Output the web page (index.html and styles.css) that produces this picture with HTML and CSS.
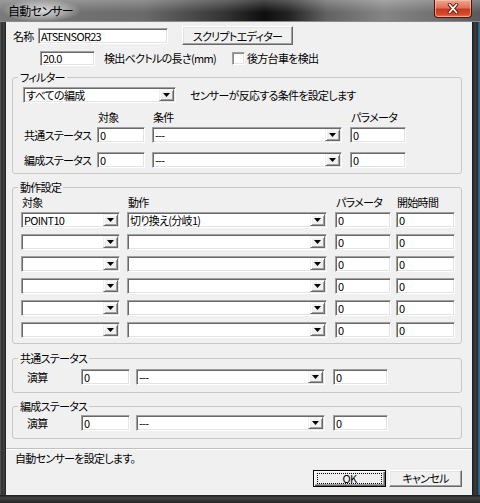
FILE: index.html
```html
<!DOCTYPE html>
<html lang="ja">
<head>
<meta charset="utf-8">
<title>自動センサー</title>
<link rel="stylesheet" href="styles.css">
</head>
<body>
<div class="window">
  <div class="titlebar">
    <span class="title">自動センサー</span>
    <span class="close"><svg width="14" height="11" viewBox="0 0 14 11"><path d="M3.5 1.5 L10.5 9.5 M10.5 1.5 L3.5 9.5" stroke="#6a1a0c" stroke-width="3.6" stroke-linecap="round"/><path d="M3.5 1.5 L10.5 9.5 M10.5 1.5 L3.5 9.5" stroke="#fff" stroke-width="1.8" stroke-linecap="round"/></svg></span>
  </div>
  <div class="middle">
    <div class="frame-left"></div>
    <div class="client">
      <div class="row row-name">
        <span class="lbl lbl-name">名称</span>
        <div class="field f-name">ATSENSOR23</div>
        <div class="btn btn-script">スクリプトエディター</div>
      </div>
      <div class="row row-len">
        <div class="field f-len">20.0</div>
        <span class="lbl lbl-len">検出ベクトルの長さ(mm)</span>
        <span class="check"></span>
        <span class="lbl lbl-check">後方台車を検出</span>
      </div>

      <div class="group g-filter">
        <span class="legend">フィルター</span>
        <div class="filter-top">
          <div class="combo c-all"><span class="val">すべての編成</span><span class="drop"></span></div>
          <span class="lbl lbl-desc">センサーが反応する条件を設定します</span>
        </div>
        <div class="fcols filter-head">
          <span></span><span class="hdr">対象</span><span class="hdr">条件</span><span class="hdr">パラメータ</span>
        </div>
        <div class="fcols filter-rows">
          <span class="lbl">共通ステータス</span><div class="field">0</div><div class="combo"><span class="val">---</span><span class="drop"></span></div><div class="field">0</div>
          <span class="lbl">編成ステータス</span><div class="field">0</div><div class="combo"><span class="val">---</span><span class="drop"></span></div><div class="field">0</div>
        </div>
      </div>

      <div class="group g-action">
        <span class="legend">動作設定</span>
        <div class="acols action-head">
          <span class="hdr">対象</span><span class="hdr">動作</span><span class="hdr">パラメータ</span><span class="hdr">開始時間</span>
        </div>
        <div class="acols action-rows">
          <div class="combo"><span class="val">POINT10</span><span class="drop"></span></div><div class="combo"><span class="val">切り換え(分岐1)</span><span class="drop"></span></div><div class="field">0</div><div class="field">0</div>
          <div class="combo"><span class="val"></span><span class="drop"></span></div><div class="combo"><span class="val"></span><span class="drop"></span></div><div class="field">0</div><div class="field">0</div>
          <div class="combo"><span class="val"></span><span class="drop"></span></div><div class="combo"><span class="val"></span><span class="drop"></span></div><div class="field">0</div><div class="field">0</div>
          <div class="combo"><span class="val"></span><span class="drop"></span></div><div class="combo"><span class="val"></span><span class="drop"></span></div><div class="field">0</div><div class="field">0</div>
          <div class="combo"><span class="val"></span><span class="drop"></span></div><div class="combo"><span class="val"></span><span class="drop"></span></div><div class="field">0</div><div class="field">0</div>
          <div class="combo"><span class="val"></span><span class="drop"></span></div><div class="combo"><span class="val"></span><span class="drop"></span></div><div class="field">0</div><div class="field">0</div>
        </div>
      </div>

      <div class="group g-op g-op1">
        <span class="legend">共通ステータス</span>
        <div class="ocols">
          <span class="lbl">演算</span><div class="field">0</div><div class="combo"><span class="val">---</span><span class="drop"></span></div><div class="field">0</div>
        </div>
      </div>

      <div class="group g-op g-op2">
        <span class="legend">編成ステータス</span>
        <div class="ocols">
          <span class="lbl">演算</span><div class="field">0</div><div class="combo"><span class="val">---</span><span class="drop"></span></div><div class="field">0</div>
        </div>
      </div>

      <div class="sep"></div>
      <div class="status">自動センサーを設定します。</div>
      <div class="buttons">
        <div class="btn btn-ok"><span class="focus">OK</span></div>
        <div class="btn btn-cancel">キャンセル</div>
      </div>
    </div>
    <div class="frame-right"></div>
  </div>
  <div class="frame-bottom"></div>
</div>
</body>
</html>
```

FILE: styles.css
```css
* { box-sizing: border-box; margin: 0; padding: 0; }
html, body { width: 480px; height: 503px; overflow: hidden; }
body {
  background: #2e2e2e;
  font-family: "Noto Sans CJK JP", "Liberation Sans", sans-serif;
  font-size: 11px;
  letter-spacing: -0.7px;
  line-height: 14px;
  color: #000;
  font-feature-settings: "palt";
}
.window { width: 480px; height: 503px; display: flex; flex-direction: column; }

/* title bar */
.titlebar {
  height: 22px;
  display: flex;
  align-items: flex-start;
  background:
    linear-gradient(180deg, rgba(255,255,255,.25) 0, rgba(255,255,255,.06) 45%, rgba(0,0,0,0) 60%),
    linear-gradient(90deg, #7a7a7a 0%, #6a6a6a 30%, #333 47%, #0e0e0e 55%, #222 60%, #626262 68%, #858585 80%, #727272 90%, #5a5a5a 100%);
  border-bottom: 1px solid #8a8a8a;
}
.title {
  margin-left: 2px;
  padding: 0 8px 0 6px;
  height: 21px;
  line-height: 21px;
  font-size: 12px;
  color: #000;
  background: radial-gradient(ellipse 50% 55% at 50% 50%, rgba(225,225,225,.95) 0%, rgba(200,200,200,.6) 60%, rgba(180,180,180,0) 100%);
}
.close {
  margin-left: auto;
  margin-right: 8px;
  width: 38px;
  height: 18px;
  display: flex;
  align-items: center;
  justify-content: center;
  border: 1px solid #4a140a;
  border-top: none;
  border-radius: 0 0 4px 4px;
  background: linear-gradient(180deg, #f0a890 0%, #e0725a 45%, #c83a1e 55%, #d84a2a 85%, #f08060 100%);
  box-shadow: inset 0 0 0 1px rgba(255,210,190,.55);
}

/* frame */
.middle { flex: 1; display: flex; min-height: 0; }
.frame-left { width: 6px; background: linear-gradient(90deg, #5a5a5a 0, #2c2c2c 2px, #454545 4px, #1c1c1c 6px); }
.frame-right { width: 8px; background: linear-gradient(90deg, #1c1c1c 0, #3c3c3c 3px, #2a2a2a 6px, #2a8fc0 7px, #1a5a80 8px); }
.frame-bottom { height: 8px; background: linear-gradient(180deg, #1c1c1c 0, #454545 3px, #303030 6px, #222 8px); }

.client {
  width: 466px;
  height: 473px;
  background: #f0f0f0;
  display: flex;
  flex-direction: column;
}

/* controls */
.lbl { white-space: nowrap; }
.field {
  height: 16px;
  background: #fff;
  border: 1px solid;
  border-color: #a0a0a0 #fff #fff #a0a0a0;
  box-shadow: inset 1px 1px 0 #696969, inset -1px -1px 0 #e3e3e3;
  padding-left: 2px;
  line-height: 14px;
  white-space: nowrap;
  overflow: hidden;
}
.combo {
  height: 16px;
  background: #fff;
  border: 1px solid;
  border-color: #a0a0a0 #fff #fff #a0a0a0;
  box-shadow: inset 1px 1px 0 #696969, inset -1px -1px 0 #e3e3e3;
  display: flex;
  align-items: stretch;
}
.combo .val { flex: 1; padding-left: 2px; line-height: 14px; white-space: nowrap; overflow: hidden; }
.combo .drop {
  width: 15px;
  margin: 1px 1px 1px 0;
  background: #f0f0f0;
  border: 1px solid;
  border-color: #f0f0f0 #696969 #696969 #f0f0f0;
  box-shadow: inset 1px 1px 0 #fff, inset -1px -1px 0 #a0a0a0;
  display: flex;
  align-items: center;
  justify-content: center;
}
.combo .drop::after {
  content: "";
  width: 7px;
  height: 4px;
  background: #000;
  clip-path: polygon(0 0, 100% 0, 50% 100%);
}
.btn {
  background: #f0f0f0;
  border: 1px solid;
  border-color: #fff #696969 #696969 #fff;
  box-shadow: inset -1px -1px 0 #a0a0a0, inset 1px 1px 0 #e3e3e3;
  display: flex;
  align-items: center;
  justify-content: center;
  white-space: nowrap;
}
.check {
  width: 13px;
  height: 13px;
  background: #fff;
  border: 1px solid;
  border-color: #a0a0a0 #fff #fff #a0a0a0;
  box-shadow: inset 1px 1px 0 #8a8a8a, inset -1px -1px 0 #e3e3e3;
}

/* top rows */
.row { display: flex; align-items: center; }
.row-name { margin-top: 4px; height: 19px; padding-left: 7px; }
.lbl-name { width: 25px; }
.f-name { width: 130px; }
.btn-script { margin-left: 14px; width: 111px; height: 19px; }
.row-len { margin-top: 5px; height: 16px; padding-left: 34px; }
.f-len { width: 55px; height: 15px; line-height: 13px; }
.lbl-len { margin-left: 9px; width: 128px; }
.lbl-check { margin-left: 2px; }

/* group boxes */
.group {
  position: relative;
  margin-left: 6px;
  width: 450px;
  border: 1px solid #c8c8c8;
  border-radius: 3px;
}
.legend {
  position: absolute;
  top: -8px;
  left: 5px;
  padding: 0 2px;
  background: #f0f0f0;
  line-height: 14px;
  white-space: nowrap;
}
.hdr { white-space: nowrap; padding-left: 1px; }

.g-filter { margin-top: 11px; padding: 9px 0 5px 10px; }
.filter-top { display: flex; align-items: center; height: 16px; }
.c-all { width: 153px; }
.lbl-desc { margin-left: 14px; }
.fcols {
  display: grid;
  grid-template-columns: 66px 48px 190px 57px;
  column-gap: 7px;
  margin-left: 1px;
}
.fcols > :nth-child(4n) { margin-left: 1px; }
.filter-head { margin-top: 7px; height: 14px; }
.filter-rows { margin-top: 3px; grid-auto-rows: 16px; row-gap: 9px; align-items: center; }

.g-action { margin-top: 13px; padding: 7px 0 5px 8px; }
.acols {
  display: grid;
  grid-template-columns: 99px 200px 57px 57px;
  column-gap: 7px;
}
.acols > :nth-child(4n+3) { margin-left: 1px; }
.acols > :nth-child(4n) { margin-left: -2px; }
.action-head { height: 14px; }
.action-rows { margin-top: 3px; grid-auto-rows: 16px; row-gap: 6px; }

.g-op { padding: 0 0 7px 14px; }
.g-op1 { margin-top: 14px; padding-top: 10px; }
.g-op2 { margin-top: 13px; padding-top: 8px; }
.ocols {
  display: grid;
  grid-template-columns: 48px 49px 189px 57px;
  column-gap: 6px;
  grid-auto-rows: 16px;
  align-items: center;
}
.ocols > :nth-child(4) { margin-left: 2px; }

/* footer */
.sep { margin-top: 9px; height: 2px; border-top: 1px solid #c0c0c0; border-bottom: 1px solid #fff; }
.status { margin-top: 1px; padding-left: 9px; height: 14px; line-height: 14px; }
.buttons { margin-top: 5px; display: flex; justify-content: flex-end; gap: 3px; padding-right: 10px; }
.btn-ok, .btn-cancel { width: 73px; height: 17px; line-height: 13px; }
.btn-ok {
  border: 1px solid #000;
  box-shadow: inset 1px 1px 0 #fff, inset -1px -1px 0 #696969, inset -2px -2px 0 #a0a0a0;
  padding: 2px 3px;
  align-items: stretch;
}
.btn-ok .focus {
  flex: 1;
  border: 1px dotted #000;
  display: flex;
  align-items: center;
  justify-content: center;
  line-height: 11px;
}
```
